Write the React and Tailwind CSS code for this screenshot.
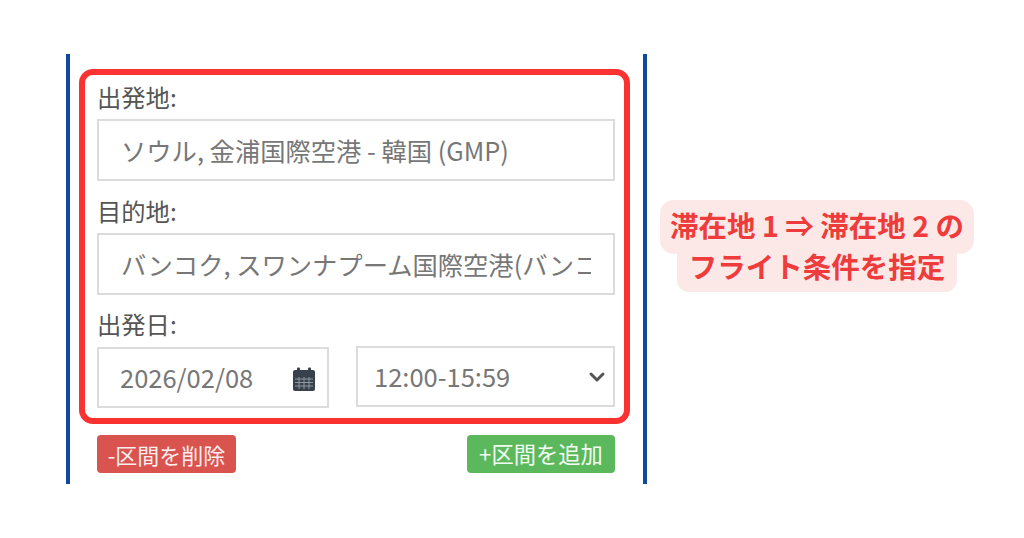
import React from "react";
import { ChevronDown } from "lucide-react";

const font = { fontFamily: '"Noto Sans CJK JP", "Noto Sans", sans-serif' };

function CalendarIcon() {
  return (
    <svg width="22" height="24" viewBox="0 0 22 24" className="mt-[3px] block">
      <rect x="4" y="0.5" width="3" height="4" rx="1" fill="#36414c" />
      <rect x="15" y="0.5" width="3" height="4" rx="1" fill="#36414c" />
      <path d="M0 5a2 2 0 0 1 2-2h18a2 2 0 0 1 2 2v4H0z" fill="#36414c" />
      <path d="M0 9h22v13a2 2 0 0 1-2 2H2a2 2 0 0 1-2-2z" fill="#36414c" />
      <path d="M2 12h18M2 15.5h18M2 19h18M6 10v12M11 10v12M16 10v12" stroke="#8f98a1" strokeWidth="1" />
    </svg>
  );
}

function Field({ label, value }) {
  return (
    <div className="flex flex-col">
      <label className="h-[36px] text-[24.3px] leading-[28px] text-[#555]">{label}</label>
      <input
        readOnly
        value={value}
        className="h-[62px] w-full border-2 border-[#dcdcdc] bg-white pr-[22px] pl-[22px] text-[25.3px] text-[#777] outline-none"
        style={font}
      />
    </div>
  );
}

export default function App() {
  return (
    <div className="flex h-[538px] w-[1024px] overflow-hidden bg-white pt-[54px] pl-[66px]" style={font}>
      <div className="h-[430px] w-[581px] shrink-0 border-x-4 border-[#0f4aa0] pt-[15px] pl-[9px]">
        <div className="h-[355px] w-[551px] rounded-[14px] border-[6px] border-[#fb3232] pt-[8px] pr-[9px] pl-[12px]">
          <div className="flex flex-col gap-[16px]">
            <Field label="出発地:" value="ソウル, 金浦国際空港 - 韓国 (GMP)" />
            <Field label="目的地:" value="バンコク, スワンナプーム国際空港(バンコク) - タイ (BKK)" />
          </div>
          <div className="mt-[16px] h-[35px] text-[24.3px] leading-[26px] text-[#555]">出発日:</div>
          <div className="flex items-start justify-between">
            <div className="mt-px flex h-[61px] w-[232px] items-center justify-between border-2 border-[#dcdcdc] pr-[12px] pl-[21px] text-[25.5px] text-[#777]">
              <span>2026/02/08</span>
              <CalendarIcon />
            </div>
            <div className="flex h-[61px] w-[259px] items-center justify-between border-2 border-[#dcdcdc] pr-[4px] pl-[16px] text-[25.5px] text-[#777]">
              <span>12:00-15:59</span>
              <ChevronDown size={24} strokeWidth={3} className="text-[#555]" />
            </div>
          </div>
        </div>
        <div className="mt-[11px] flex w-[518px] translate-x-[18px] justify-between">
          <button className="flex h-[38px] w-[139px] items-center justify-center rounded-[4px] bg-[#d9534f] text-[22px] text-[#fbeeee]">
            -区間を削除
          </button>
          <button className="flex h-[38px] w-[148px] items-center justify-center rounded-[4px] bg-[#5cb85c] text-[22.3px] text-[#f2fbf2]">
            +区間を追加
          </button>
        </div>
      </div>
      <div className="ml-[13px] flex flex-col items-center self-start pt-[146px]">
        <div className="flex h-[54px] w-[314px] items-center justify-center rounded-[14px] bg-[#fde8e8] pb-[3px] text-[28.5px] font-bold whitespace-nowrap text-[#ee3b3b]">
          滞在地 1 ⇒ 滞在地 2 の
        </div>
        <div className="flex h-[38px] w-[280px] items-center justify-center rounded-b-[12px] bg-[#fde8e8] pb-[13px] text-[28.5px] font-bold whitespace-nowrap text-[#ee3b3b]">
          フライト条件を指定
        </div>
      </div>
    </div>
  );
}
